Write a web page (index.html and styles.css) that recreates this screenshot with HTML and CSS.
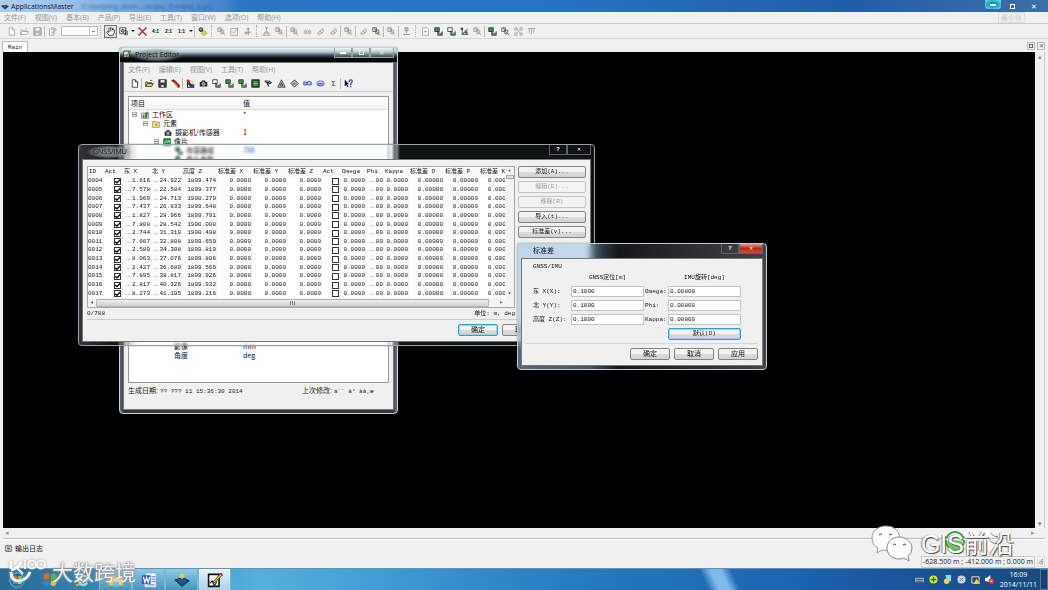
FILE: index.html
```html
<!DOCTYPE html>
<html lang="zh-CN">
<head>
<meta charset="utf-8">
<title>ApplicationsMaster</title>
<link rel="stylesheet" href="styles.css">
</head>
<body>
<svg class="defs" aria-hidden="true">
  <symbol id="new" viewBox="0 0 12 12"><path d="M3 1h4l3 3v7H3zM7 1v3h3" fill="#fff" stroke="currentColor"/></symbol>
  <symbol id="open" viewBox="0 0 12 12"><path d="M1 10V4h3l1 1h4v2M1 10l2-4h8l-2 4zM7 2q2-1 3 1" fill="var(--f,#fff)" stroke="currentColor"/></symbol>
  <symbol id="save" viewBox="0 0 12 12"><path d="M1 1h10v10H1z" fill="var(--f,#bbb)" stroke="currentColor"/><path d="M3 1h6v4H3zM4 8h4v3H4z" fill="#fff" stroke="currentColor" stroke-width=".6"/></symbol>
  <symbol id="folder" viewBox="0 0 12 12"><path d="M1 2h4l1 1h5v8H1z" fill="#f3e788" stroke="#8b8030"/><path d="M5 5h3v4H5z" fill="#b6a030"/></symbol>
  <symbol id="edit" viewBox="0 0 12 12"><path d="M2 3h6v8H2zM5 8l5-6 1 1-5 6zM4 1l7 1" fill="#fff" stroke="currentColor"/></symbol>
  <symbol id="hand" viewBox="0 0 12 12"><path d="M4 11 1 7l1-1 2 1V2l1-1 1 1V1h1l1 1h1v2l1-1 1 1v4L9 11z" fill="#fff" stroke="#111"/><path d="M6 2v4M8 2v4" stroke="#111" stroke-width=".7"/></symbol>
  <symbol id="zoomwin" viewBox="0 0 12 12"><path d="M1 1h8v8H1z" fill="#fff" stroke="#222"/><circle cx="5" cy="5" r="2" fill="#aaa" stroke="#222"/><path d="m6 7 3 4V3M11 5v6" stroke="#222" fill="none"/></symbol>
  <symbol id="cross" viewBox="0 0 12 12"><path d="m2 2 8 8M10 2l-8 8" stroke="#b01818" stroke-width="1.5"/><path d="M1 3V1h2M9 1h2v2M1 9v2h2M9 11h2V9" stroke="#422" fill="none"/></symbol>
  <symbol id="gears" viewBox="0 0 12 12"><circle cx="4" cy="3.500" r="2.500" fill="#555" stroke="#111"/><circle cx="8" cy="8" r="3" fill="#e8e020" stroke="#666" stroke-dasharray="1.500 1"/><circle cx="4" cy="3" r="1" fill="#eee"/></symbol>
  <symbol id="pair" viewBox="0 0 12 12"><path d="M1 1h5v5H1zM5 4h4v5H5zM7 7l4 4M3 1l3 5" fill="#ddd" stroke="currentColor"/></symbol>
  <symbol id="check" viewBox="0 0 12 12"><path d="M1 2h9v9H1zM3 6l2 2 6-7" fill="none" stroke="currentColor"/></symbol>
  <symbol id="plus" viewBox="0 0 12 12"><path d="M2 7h9M7 2v9M5 4l2-3 1 3M2 9h4" fill="none" stroke="currentColor" stroke-width="1.300"/></symbol>
  <symbol id="axes" viewBox="0 0 12 12"><path d="M3 1v9h8M3 10l7-7" fill="none" stroke="#3f8a4b" stroke-width="1.500"/><path d="M1 1h3v3H1zM7 6h3v3H7z" fill="#444"/></symbol>
  <symbol id="person" viewBox="0 0 12 12"><path d="M4 1h4M6 1v4L2 10M6 5l4 5M3 8h6M1 11h10" fill="none" stroke="currentColor" stroke-width="1.200"/></symbol>
  <symbol id="stamp" viewBox="0 0 12 12"><path d="M4 1h4v4H4zM6 5v4M1 10h10" fill="#ccc" stroke="currentColor" stroke-width="1.200"/></symbol>
  <symbol id="glass" viewBox="0 0 12 12"><circle cx="3.500" cy="7" r="2" fill="#ddd" stroke="currentColor"/><circle cx="8.500" cy="7" r="2" fill="#ddd" stroke="currentColor"/><path d="m2 5 2-2M7 5l2-2" stroke="currentColor"/></symbol>
  <symbol id="link" viewBox="0 0 12 12"><path d="M2 9 5 5l3 3-3 2zM6 5l3-3 1 4-2 2" fill="#ddd" stroke="currentColor"/></symbol>
  <symbol id="ruler" viewBox="0 0 12 12"><path d="M1 2h10M3 2v6M6 2v8M9 2v6" fill="none" stroke="currentColor"/></symbol>
  <symbol id="nodes" viewBox="0 0 12 12"><path d="M1 1h3v3H1zM8 1h3v3H8zM1 8h3v3H1zM8 8h3v3H8zM4 4l4 4M8 4 4 8" fill="#eee" stroke="currentColor"/></symbol>
  <symbol id="page" viewBox="0 0 12 12"><path d="M2 1h6l2 2v8H2zM4 6h4M6 4v4" fill="#fff" stroke="currentColor"/></symbol>
  <symbol id="imgs" viewBox="0 0 12 12"><path d="M1 1h6v5H1z" fill="var(--f,#fff)" stroke="#222"/><path d="M5 5v6h6V6L8 9z" fill="#696" stroke="#333"/><path d="M7 8l4-2" stroke="#dfd"/></symbol>
  <symbol id="camera" viewBox="0 0 12 12"><path d="M1 4h2l1-2h4l1 2h2v6H1z" fill="#222"/><circle cx="6" cy="6.500" r="2.200" fill="#888" stroke="#eee" stroke-width=".7"/></symbol>
  <symbol id="chip" viewBox="0 0 12 12"><path d="M1 1h10v10H1z" fill="#235c2c" stroke="#111"/><path d="M3 4h6M3 6h6M3 8h6" stroke="#9ed89e"/></symbol>
  <symbol id="photo" viewBox="0 0 12 12"><path d="M1 1h10v10H1z" fill="#1f9a45" stroke="#143"/><path d="m2 9 3-5 2 3 2-4 2 5" stroke="#cfc" fill="none"/></symbol>
  <symbol id="tri" viewBox="0 0 12 12"><path d="M6 1 11 11H1zM6 5 8 9H4z" fill="#bbb" stroke="#333"/></symbol>
  <symbol id="diamond" viewBox="0 0 12 12"><path d="M6 1 11 6 6 11 1 6z" fill="#888" stroke="#444"/><path d="m3 6 3-3 3 3-3 3z" fill="none" stroke="#ddd"/></symbol>
  <symbol id="blue" viewBox="0 0 12 12"><path d="M1 4h4v4H1zM5 6l2-3 4 1v4H7z" fill="#aac4ff" stroke="#2834b8"/></symbol>
  <symbol id="ring" viewBox="0 0 12 12"><ellipse cx="6" cy="6" rx="5" ry="3.500" fill="#c5cfff" stroke="#4b50bb"/><path d="M3 6h6v2H3z" fill="none" stroke="#4b50bb"/></symbol>
  <symbol id="pencil" viewBox="0 0 12 12"><path d="m1 2 3-1 7 7v3H9z" fill="#d02020" stroke="#401010"/><path d="m3 4 6 6" stroke="#ff8"/></symbol>
  <symbol id="help" viewBox="0 0 12 12"><path d="M1 1v9l2-2 2 3 1-1-2-3h3z" fill="#111"/><path d="M7 4q0-3 2-3t2 2-2 3v2M9 9v2" fill="none" stroke="#2530b0" stroke-width="1.500"/></symbol>
  <symbol id="arm" viewBox="0 0 12 12"><path d="M1 2h6l4 3-3 2-2-1 1 4H5L4 6 1 4z" fill="#333"/><path d="M3 3h3l2 2" fill="none" stroke="#ddd"/></symbol>
  <symbol id="mark" viewBox="0 0 12 12"><path d="M2 1v10h9" stroke="#222" stroke-width="1.500" fill="none"/><path d="m3 2 7 8-4 1-3-4z" fill="#333"/><path d="M1 1h4v3H1z" fill="#c03020"/><path d="M6 7h5v4H6z" fill="#28408c"/><path d="M6 3h3v3" stroke="#c8ba20" fill="none"/></symbol>
  <symbol id="work" viewBox="0 0 12 12"><path d="M1 3h10v8H1z" fill="#efe48c" stroke="#555"/><path d="M3 10V6h2v4zM6 10V3h3v7z" fill="#3a62a0"/><path d="M8 1h3v4H8z" fill="#4b9a50"/></symbol>
  <symbol id="note" viewBox="0 0 20 20"><path d="M2 3h13v15H2z" fill="#fff" stroke="#111" stroke-width="2"/><path d="M4 14q3-6 4 0t4-2" fill="none" stroke="#111" stroke-width="1.500"/><path d="M8 12 17 2l2 2-9 9-3 1z" fill="#eed520" stroke="#111"/><path d="m16 2 2-1 2 2-1 2z" fill="#a02860"/></symbol>
  <symbol id="gem" viewBox="0 0 20 20"><path d="m1 10 9 8 9-7-8-4z" fill="#134a7d" stroke="#07284a"/><path d="M5 7q5 6 10 0v5q-5 5-10 0z" fill="#1d5c93"/><path d="m6 5 4-4 4 4-4 4z" fill="#edc94d"/></symbol>
</svg>

<header class="titlebar">
  <svg class="ic"><use href="#gem"/></svg>
  <h1>ApplicationsMaster</h1>
  <span class="ghost">E:\tianjiang_data\...\anjiay_E\anjiay_E.prj</span>
  <div class="sys"><button class="min" aria-label="最小化"><i></i></button><button aria-label="还原"><i class="box"></i></button><button aria-label="关闭">✕</button></div>
</header>
<nav class="menubar">
  <button>文件(F)</button><button>视图(V)</button><button>基本(B)</button><button>产品(P)</button><button>导出(E)</button><button>工具(T)</button><button>窗口(W)</button><button>选项(O)</button><button>帮助(H)</button>
  <span class="tip">最小化</span>
</nav>
<div class="toolbar main">
  <button><svg><use href="#new"/></svg></button><button><svg><use href="#open"/></svg></button><button><svg><use href="#save"/></svg></button><i class="sep"></i>
  <button><svg><use href="#edit"/></svg></button>
  <select aria-label="比例"><option></option></select><i class="grip"></i>
  <button class="on"><svg><use href="#hand"/></svg></button><button><svg><use href="#zoomwin"/></svg></button><button class="drop" aria-label="更多"></button>
  <button><svg><use href="#cross"/></svg></button><button class="ratio">4:1</button><button class="ratio">2:1</button><button class="ratio">1:1</button><button class="drop" aria-label="更多"></button><i class="sep"></i>
  <button><svg><use href="#gears"/></svg></button><i class="grip"></i>
  <button><svg><use href="#pair"/></svg></button><button><svg><use href="#check"/></svg></button><button><svg><use href="#plus"/></svg></button><i class="grip"></i>
  <button><svg><use href="#person"/></svg></button><button><svg><use href="#pair"/></svg></button><i class="sep"></i>
  <button><svg><use href="#pair"/></svg></button><button><svg><use href="#glass"/></svg></button><button><svg><use href="#link"/></svg></button><button><svg><use href="#link"/></svg></button><i class="sep"></i>
  <button><svg><use href="#pair"/></svg></button><i class="sep"></i>
  <button><svg><use href="#link"/></svg></button><button class="mid"><svg><use href="#pair"/></svg></button><i class="sep"></i>
  <button><svg><use href="#pair"/></svg></button><i class="sep"></i>
  <button><svg><use href="#stamp"/></svg></button><i class="grip"></i>
  <button><svg><use href="#page"/></svg></button><button><svg class="g"><use href="#imgs"/></svg></button><button><svg><use href="#imgs"/></svg></button><button><svg><use href="#axes"/></svg></button><button><svg><use href="#pair"/></svg></button><i class="sep"></i>
  <button><svg class="g"><use href="#imgs"/></svg></button><button class="mid"><svg><use href="#pair"/></svg></button><button><svg><use href="#nodes"/></svg></button><button><svg><use href="#ruler"/></svg></button>
</div>
<div class="tabs"><button class="tab">Main</button><div class="dock"><button aria-label="浮动"><i class="box"></i></button><button aria-label="关闭">✕</button></div></div>
<main class="view"><div class="canvas"></div><div class="vbar"><span>▴</span><span>▾</span></div></main>
<div class="hbar"><span>◂</span><span>▸</span></div>
<section class="log"><svg viewBox="0 0 10 10"><path d="M1 1h8v8H1zM3 3h4M3 5h4M3 7h4" fill="none" stroke="#333"/></svg>输出日志</section>
<footer class="status"><output>-628.500 m ; -412.000 m ; 0.000 m</output><svg viewBox="0 0 10 12"><path d="M3 6h5v4H3zM6 6V3q2-2 2 1" fill="none" stroke="#777"/></svg></footer>

<section class="win editor">
  <header><svg><use href="#note"/></svg><h2>Project Editor</h2><div class="wbtn"><button aria-label="最小化"><i></i></button><button aria-label="最大化"><i class="box"></i></button><button aria-label="关闭">✕</button></div></header>
  <div class="body">
    <nav class="menubar"><button>文件(F)</button><button>编辑(E)</button><button>视图(V)</button><button>工具(T)</button><button>帮助(H)</button></nav>
    <div class="toolbar dark">
      <button><svg><use href="#new"/></svg></button><i class="sep"></i><button><svg class="y"><use href="#open"/></svg></button><button><svg class="k"><use href="#save"/></svg></button><button><svg><use href="#pencil"/></svg></button><i class="sep"></i>
      <button><svg><use href="#mark"/></svg></button><button><svg><use href="#camera"/></svg></button><button><svg><use href="#imgs"/></svg></button><button><svg class="g"><use href="#imgs"/></svg></button><button><svg class="g"><use href="#imgs"/></svg></button><button><svg><use href="#chip"/></svg></button><button><svg><use href="#arm"/></svg></button><button><svg><use href="#tri"/></svg></button><button><svg><use href="#diamond"/></svg></button><button><svg><use href="#blue"/></svg></button><button><svg><use href="#ring"/></svg></button><button class="sigma">Σ</button><i class="sep"></i>
      <button><svg><use href="#help"/></svg></button>
    </div>
    <div class="tree">
      <div class="row head"><span>项目</span><span>值</span></div>
      <div class="row"><span><i class="exp"></i><svg><use href="#work"/></svg>工作区</span><span>*</span></div>
      <div class="row l1"><span><i class="exp"></i><svg><use href="#folder"/></svg>元素</span><span></span></div>
      <div class="row l2"><span><svg><use href="#camera"/></svg>摄影机/传感器</span><span>1</span></div>
      <div class="row l2"><span><i class="exp"></i><svg><use href="#photo"/></svg>像片</span><span></span></div>
      <div class="row l3"><span><svg class="g"><use href="#imgs"/></svg>传感器组</span><span class="num">788</span></div>
      <div class="row l3"><span><svg class="g"><use href="#imgs"/></svg>像片参数</span><span></span></div>
      <div class="space"></div>
      <div class="row l2"><span>影像</span><span>mm</span></div>
      <div class="row l2"><span>角度</span><span>deg</span></div>
    </div>
    <div class="dates"><span>生成日期: <code>?? ??? 11 15:36:30 2014</code></span><span>上次修改: <code>à¨¨ à° àà‚æ</code></span></div>
  </div>
</section>

<section class="win gnss">
  <header><h2>GNSS/IMU</h2><div class="wbtn"><button aria-label="帮助">?</button><button aria-label="关闭">✕</button></div></header>
  <div class="body">
    <div class="cols">
      <div class="grid">
        <div class="clip">
          <table>
            <colgroup><col class="c16"><col class="c19"><col class="c28"><col class="c31"><col class="c35"><col class="c35"><col class="c35"><col class="c35"><col class="c19"><col class="c25"><col class="c18"><col class="c25"><col class="c35"><col class="c35"><col class="c35"></colgroup>
            <thead><tr><th>ID</th><th>Act</th><th>东 X</th><th>北 Y</th><th>高度 Z</th><th>标准差 X</th><th>标准差 Y</th><th>标准差 Z</th><th>Act</th><th>Omega</th><th>Phi</th><th>Kappa</th><th>标准差 O</th><th>标准差 P</th><th>标准差 K</th></tr></thead>
            <tbody id="rows"></tbody>
          </table>
        </div>
        <div class="gv"><span>▴</span><b></b><span>▾</span></div>
        <div class="gh"><span>◂</span><b><i></i></b><span>▸</span></div>
      </div>
      <div class="side"><button>添加(A)...</button><button disabled>编辑(E)...</button><button disabled>移除(R)</button><button>导入(t)...</button><button>标准差(v)...</button></div>
    </div>
    <div class="count"><span>0/788</span><span>单位: m, deg</span></div>
    <div class="actions"><button class="def">确定</button><button>取消</button><button>应用</button></div>
  </div>
</section>

<section class="win dev">
  <header><h2>标准差</h2><div class="wbtn"><button aria-label="帮助">?</button><button class="red" aria-label="关闭">✕</button></div></header>
  <form class="body">
    <fieldset>
      <legend>GNSS/IMU</legend>
      <div class="fields">
        <b class="h1">GNSS定位[m]</b><b class="h2">IMU旋转[deg]</b>
        <label for="x">东 X(X):</label><input id="x" value="0.1000"><label for="o">Omega:</label><input id="o" value="0.00800">
        <label for="y">北 Y(Y):</label><input id="y" value="0.1000"><label for="p">Phi:</label><input id="p" value="0.00800">
        <label for="z">高度 Z(Z):</label><input id="z" value="0.1000"><label for="k">Kappa:</label><input id="k" value="0.00800">
        <button type="button" class="def">默认(D)</button>
      </div>
    </fieldset>
    <div class="actions"><button type="button">确定</button><button type="button">取消</button><button type="button">应用</button></div>
  </form>
</section>

<footer class="taskbar">
  <button class="start" aria-label="开始"><svg viewBox="0 0 20 20"><circle cx="10" cy="10" r="9" fill="#206a9d" stroke="#8cc8e0"/><path d="M5 6q2-2 5-1v4q-3-1-5 1z" fill="#e75b27"/><path d="M11 5q2 1 5-1v5q-3 1-5 0z" fill="#8cc63e"/><path d="M5 11q2-2 5-1v5q-3-1-5 0z" fill="#35a7df"/><path d="M11 10q2 1 5 0v4q-3 2-5 1z" fill="#f9c62d"/></svg></button>
  <button aria-label="Office"><svg viewBox="0 0 20 20"><path d="M2 3q4-3 7 0v6H2z" fill="#e86a22"/><path d="M11 3q4-3 7 1v6h-7z" fill="#5eb53a"/><path d="M2 11h7v6q-5 2-7-2z" fill="#2f88d0"/><path d="M11 11h7q1 5-4 7l-3-2z" fill="#f2c52f"/></svg></button>
  <button aria-label="浏览器"><svg viewBox="0 0 20 20"><path d="M15 13q-2 4-6 3t-4-6 6-5 5 5H6" fill="none" stroke="#9fdcf4" stroke-width="3"/><path d="M2 15Q1 19 8 14T18 3" fill="none" stroke="#f0ce55" stroke-width="1.500"/></svg></button>
  <button class="task" aria-label="资源管理器"><svg viewBox="0 0 20 20"><path d="M1 4h7l1 2h10v11H1z" fill="#eccb6a" stroke="#c9a040"/><path d="M1 9h18v5H1z" fill="#f8e6a6"/><path d="M6 12h8v6H6z" fill="#77bde4"/></svg></button>
  <button class="task" aria-label="Word"><svg viewBox="0 0 20 20"><path d="M6 1h13v18H4z" fill="#f3f8ff" stroke="#7c9ac8"/><path d="M1 4h11v11H1z" fill="#3a62ae"/><path d="m3 6 2 7 2-6 2 6 2-7" fill="none" stroke="#fff" stroke-width="1.500"/><path d="M13 6h5M13 9h5M13 12h5M7 16h10" stroke="#3a62ae"/></svg></button>
  <button class="task" aria-label="ApplicationsMaster"><svg viewBox="0 0 20 20"><use href="#gem"/></svg></button>
  <button class="task cur" aria-label="Project Editor"><svg viewBox="0 0 20 20"><use href="#note"/></svg></button>
  <div class="tray">
    <svg viewBox="0 0 10 10"><path d="M0 3h10v5H0z" fill="#8fa3b5"/><path d="M1 5h8M2 7h6" stroke="#4a5c6c"/></svg>
    <svg viewBox="0 0 10 10"><circle cx="5" cy="5" r="4.500" fill="#e6e43a"/><path d="M5 2v6M2 5h6" stroke="#287330" stroke-width="1.500"/></svg>
    <svg viewBox="0 0 10 10"><path d="M3 0h6v7H4z" fill="#8fd1f3"/><circle cx="4" cy="7" r="3" fill="#ecd35a"/></svg>
    <svg viewBox="0 0 10 10"><circle cx="5" cy="5" r="4.500" fill="#cdd8de"/><path d="m3 3 4 4M7 3 3 7" stroke="#678"/></svg>
    <svg viewBox="0 0 10 10"><path d="M1 2h8v7H1z" fill="#345" stroke="#eee"/><path d="m6 4 4 6H3z" fill="#f2d33b"/></svg>
    <svg viewBox="0 0 10 10"><path d="M0 3h2l4-3v9L2 7H0z" fill="#f2f2f2"/><circle cx="7" cy="7" r="3" fill="#d83838"/><path d="m6 6 2 2M8 6 6 8" stroke="#fff"/></svg>
  </div>
  <time>16:09<br>2014/11/11</time><i class="peek"></i>
</footer>

<div class="mark-left"><svg viewBox="0 0 40 26"><g fill="none" stroke="#fff" stroke-opacity=".85" stroke-width="3"><path d="M3 3v8M13 4Q11 10 3 12M3 14q0 9 8 9 8-1 11-9"/><path d="m8 9 7 7" stroke-width="2"/><path d="M17 2v9" stroke-width="2"/><circle cx="24" cy="6.500" r="4" stroke-width="2"/><circle cx="33" cy="6.500" r="4" stroke-width="2"/></g></svg><span>大数跨境</span></div>
<div class="mark-right">
  <svg viewBox="0 0 42 38"><path d="M15 1C7 1 1 6 1 13q0 7 6 10l-1 5 5-3q4 1 8 0-1-9 10-12Q27 1 15 1z" fill="#fff" stroke="#999"/><path d="M28 12c-7 0-12 5-12 11s5 11 12 11q3 0 5-1l5 3-1-5q4-3 4-8c0-6-6-11-13-11z" fill="#fff" stroke="#888"/><path d="M8 10q2-2 3 0M18 10q2-2 3 0M22 20q2-2 3 0M32 20q2-2 3 0" stroke="#444" fill="none"/></svg>
  <span>GIS前沿</span>
  <svg class="ball" viewBox="0 0 60 24"><rect x="18" y="1" width="40" height="20" rx="10" fill="#fff" opacity=".7"/><circle cx="12" cy="12" r="9" fill="#f4fff0" stroke="#35a348" stroke-width="2"/><path d="M4 13q8-4 16 0-2 8-8 8t-8-8z" fill="#75c65d"/></svg>
</div>
<script src="rows.js"></script>
</body>
</html>
```
FILE: styles.css
```css
* { box-sizing: border-box; }
body {
  margin: 0; min-height: 100vh; display: flex; flex-direction: column;
  background: #f0f0f0; color: #222; overflow: hidden;
  font: 7px/9px "Open Sans", "Noto Sans CJK SC", sans-serif;
}
button, input, select { font: inherit; color: inherit; padding: 0; margin: 0; }
button { border: 0; background: none; white-space: nowrap; }
h1, h2 { margin: 0; font-size: 7px; font-weight: 400; }
i { font-style: normal; }
.defs { position: absolute; width: 0; height: 0; }
.box { display: block; width: 5px; height: 5px; border: 1px solid currentColor; }

.titlebar {
  height: 12px; display: flex; align-items: center; gap: 2px; padding-left: 1px; flex: none;
  background: linear-gradient(90deg, #aecdee 0, #9cc3ec 60px, #6fa5dd 140px, #4685cd 225px, #2a75c6 240px, #2672c4 560px, #215fa9 850px, #3d6fa8 100%);
}
.titlebar h1 { color: #111; }
.ic { width: 8px; height: 8px; }
.ghost { margin-left: 6px; color: #1b4a82; filter: blur(1px); opacity: .7; }
.sys { margin-left: auto; display: flex; height: 12px; padding-right: 3px; }
.sys button { width: 22px; display: grid; place-items: center; color: #fff; }
.sys .min { background: radial-gradient(#1a85b0 20%, #58dcf0 90%); width: 16px; height: 9px; border-radius: 0 0 3px 3px; }
.sys .min i, .wbtn i:not(.box) { width: 6px; height: 2px; background: #fff; }

.menubar { height: 12px; flex: none; display: flex; align-items: center; gap: 9px; padding-left: 4px; color: #999; border-bottom: 1px solid #ccc; }
.tip { margin-left: auto; margin-right: 23px; padding: 0 2px; border: 1px solid #ddd; color: #ccc; }
.toolbar { height: 15px; flex: none; display: flex; align-items: center; padding-left: 5px; color: #999; border-bottom: 1px solid #d8d8d8; }
.toolbar button { width: 13px; height: 13px; display: grid; place-items: center; flex: none; }
.toolbar svg { width: 9px; height: 9px; }
.toolbar .on { border: 1px solid #777; background: #ddd; }
.toolbar .drop { width: 6px; }
.drop::before { content: ""; border: 2px solid transparent; border-top: 2px solid #222; border-bottom: 0; }
.toolbar .ratio { font: bold 5px/9px "Liberation Sans", sans-serif; color: #111; }
.toolbar .mid { color: #555; }
.toolbar .sigma { color: #111; }
.sep { width: 1px; height: 11px; margin-right: 1px; background: #bbb; flex: none; }
.grip { width: 2px; height: 12px; margin: 0 2px; border-left: 1px dotted #aaa; flex: none; }
.toolbar select {
  appearance: none; width: 37px; height: 10px; margin-left: 2px; border: 1px solid #b8bdc4; border-radius: 0;
  background: linear-gradient(#888, #888) right 2px center / 3px 1px no-repeat, linear-gradient(#ccc, #ccc) right 7px center / 1px 10px no-repeat, #fafafa;
}
.toolbar.dark { color: #222; }
.g { --f: #3a9a4a; }
.y { --f: #e8d860; }
.k { --f: #444; }

.tabs { height: 13px; flex: none; display: flex; align-items: flex-end; padding: 0 3px 0 2px; }
.tab { width: 26px; height: 11px; background: #fff; border: 1px solid #bbb; border-bottom: 0; font: 6px/9px "Liberation Mono", monospace; }
.dock { margin-left: auto; display: flex; gap: 2px; align-self: center; color: #666; }
.dock button { width: 8px; height: 8px; border: 1px solid #bbb; display: grid; place-items: center; font-size: 6px; line-height: 6px; }
.dock .box { width: 4px; height: 4px; }
.view { flex: 1; display: flex; margin: 0 3px; }
.canvas { flex: 1; background: #000; }
.vbar { width: 10px; display: flex; flex-direction: column; justify-content: space-between; align-items: center; color: #888; border-right: 1px solid #ccc; }
.hbar { height: 11px; flex: none; margin: 0 3px; padding: 0 10px 0 2px; display: flex; justify-content: space-between; color: #999; border-bottom: 1px solid #bbb; }
.log { height: 17px; flex: none; display: flex; align-items: center; gap: 3px; padding-left: 5px; border-top: 1px solid #fff; color: #111; }
.log svg { width: 7px; height: 7px; }
.status { height: 12px; flex: none; display: flex; justify-content: flex-end; gap: 2px; padding-right: 3px; }
.status output { border: 1px solid #ccc; padding: 0 1px; }
.status svg { width: 8px; height: 11px; border: 1px solid #ddd; }

.win { position: absolute; display: flex; flex-direction: column; border: 1px solid #98a4aa; border-radius: 4px; padding: 0 3px 3px; box-shadow: 0 0 1px #000; }
.win > header { height: 14px; flex: none; display: flex; align-items: flex-start; gap: 3px; }
.win h2 { line-height: 14px; }
.win .body { flex: 1; background: #f0f0f0; border: 1px solid #777; min-height: 0; display: flex; flex-direction: column; }
.wbtn { margin-left: auto; display: flex; }
.wbtn button { width: 18px; height: 10px; display: grid; place-items: center; color: #fff; border: 1px solid #59636a; border-top: 0; font-weight: 700; line-height: 8px; }
.wbtn button:last-child { width: 24px; }

.editor { left: 119px; top: 47px; width: 279px; height: 367px; background: linear-gradient(90deg, #667, #30363a 4px, #30363a calc(100% - 4px), #778); border-color: #c5d4da; }
.editor > header { margin: 0 -3px; padding: 0 3px; background: linear-gradient(#e4f4f7 0, #b6c9ce 4px, #4d565a 7px, #0c0e10 10px, #000); border-radius: 3px 3px 0 0; }
.editor > header svg { width: 8px; height: 8px; margin-top: 2px; }
.editor h2 { padding: 0 4px; color: #111; background: radial-gradient(closest-side, rgba(140, 152, 158, .9), rgba(140, 152, 158, .7) 60%, transparent); }
.editor > header { gap: 0; }
.editor .wbtn button { color: #dde6ea; border-color: #93a2a8; background: linear-gradient(rgba(255, 255, 255, .4), rgba(120, 130, 136, .4)); font-weight: 400; }
.editor .menubar { height: 13px; border: 0; }
.editor .toolbar { height: 16px; padding-left: 4px; border-color: #ccc; }
.tree { flex: 1; display: flex; flex-direction: column; margin: 4px 4px 0 4px; padding-bottom: 22px; background: #fff; border: 1px solid #999; min-height: 0; }
.row { display: grid; grid-template-columns: 114px 1fr; height: 9px; line-height: 9px; flex: none; font-family: "Noto Sans CJK SC", sans-serif; color: #111; }
.row span { display: flex; align-items: center; gap: 2px; padding-left: 3px; }
.row svg { width: 8px; height: 8px; margin-right: 1px; }
.row .num { color: #2468b0; }
.row.head { height: 13px; background: linear-gradient(#fff, #f2f3f5); border-bottom: 1px solid #ddd; }
.row.head span { padding-left: 2px; }
.row.head span + span, .row span + span { padding-left: 0; }
.row.l1 span:first-child { padding-left: 14px; }
.row.l2 span:first-child { padding-left: 35px; }
.row.l2 span:first-child:has(.exp) { padding-left: 25px; }
.row.l3 span:first-child { padding-left: 46px; }
.row.l2 span:not(:has(svg)):first-child { padding-left: 45px; }
.exp { width: 5px; height: 5px; border: 1px solid #aaa; margin-right: 2px; background: linear-gradient(#777, #777) center / 3px 1px no-repeat; }
.space { flex: 1; }
.dates { display: flex; height: 26px; flex: none; padding: 3px 0 0 4px; font-family: "Liberation Sans", "Noto Sans CJK SC", sans-serif; }
.dates span { width: 174px; flex: none; white-space: nowrap; }
.dates span + span { width: auto; }
code { font: 6px/9px "Liberation Mono", monospace; }

.gnss, .dev { font-family: "Liberation Mono", "Noto Sans CJK SC", monospace; font-size: 6px; color: #111; }
.gnss { left: 78px; top: 144px; width: 517px; height: 202px; background: linear-gradient(90deg, rgba(70, 74, 78, .7), rgba(40, 42, 44, .3) 42px, rgba(220, 235, 245, .08) 60px); backdrop-filter: blur(1px); }
.gnss h2 { margin-left: 4px; padding: 0 7px; font-family: "Open Sans", sans-serif; color: #111; background: radial-gradient(closest-side, rgba(150, 155, 160, .9), rgba(150, 155, 160, .7) 60%, transparent); }
.gnss .body { padding: 6px 4px 0 4px; }
.cols { display: flex; gap: 3px; }
.grid { flex: 1; min-width: 0; height: 142px; display: grid; grid-template: 1fr 9px / 1fr 9px; border: 1px solid #aaa; background: #fff; }
.clip { overflow: hidden; min-width: 0; min-height: 0; }
table { table-layout: fixed; width: 426px; height: 131px; border-collapse: separate; border-spacing: 0; }
th, td { padding: 0 1px; text-align: right; white-space: nowrap; overflow: hidden; line-height: 8px; font-weight: 400; }
td { background: linear-gradient(#f2f2f2, #f2f2f2) right / 1px 100% no-repeat; }
th { text-align: left; height: 10px; background: #fafafa; }
td:first-child { text-align: left; padding: 0; }
.more { font-family: "Liberation Sans", sans-serif; line-height: 0; margin-right: 1px; }
.c16 { width: 16px; } .c18 { width: 18px; } .c19 { width: 19px; } .c25 { width: 25px; }
.c28 { width: 28px; } .c31 { width: 31px; } .c35 { width: 35px; }
td input { appearance: none; display: block; width: 7px; height: 7px; border: 1px solid #333; background: #fff; }
.gnss td input { margin: 0 1px 0 auto; }
td input:checked::before { content: ""; display: block; width: 5px; height: 5px; background: #111; clip-path: polygon(0 40%, 40% 60%, 100% 0, 100% 40%, 40% 100%, 0 70%); }
.gv, .gh { background: #f3f3f3; display: flex; align-items: center; color: #555; line-height: 8px; }
.gv { flex-direction: column; }
.gv b { width: 8px; height: 4px; border: 1px solid #aaa; background: #ddd; }
.gv span:last-child { margin-top: auto; }
.gh { grid-column: 1 / 3; padding: 0 11px 0 2px; gap: 2px; }
.gh b { flex: 1; height: 8px; margin-right: 8px; border: 1px solid #b5b5b5; border-radius: 1px; background: linear-gradient(#eee, #cfcfcf); display: grid; place-items: center; }
.gh i { width: 5px; height: 4px; background: repeating-linear-gradient(90deg, #777 0 1px, transparent 1px 2px); }
.side { width: 68px; display: flex; flex-direction: column; gap: 3px; }
.side button, .actions button, .def { height: 12px; line-height: 10px; border: 1px solid #858585; border-radius: 2px; background: linear-gradient(#f3f3f3 50%, #dcdcdc 50%, #d2d2d2); }
.side button:disabled { color: #999; border-color: #c5c5c5; background: #f3f3f3; }
.count { display: flex; justify-content: space-between; height: 12px; line-height: 11px; border-bottom: 1px solid #ccc; padding-right: 71px; }
.actions { display: flex; justify-content: flex-end; gap: 4px; padding-top: 4px; }
.actions button { width: 40px; font-size: 7px; }
.actions .def, .def { border-color: #3c9cc8; box-shadow: inset 0 0 1px 1px #8fd5ee; }

.dev { left: 517px; top: 243px; width: 250px; height: 127px; background: linear-gradient(90deg, rgba(150, 190, 225, .55), rgba(150, 190, 225, .45) 72px, rgba(40, 44, 50, .5) 100px, rgba(110, 114, 120, .6)); backdrop-filter: blur(3px); border-color: #c0ccd4; }
.dev h2 { padding-left: 12px; color: #111; }
.dev .red { background: linear-gradient(#d89a90, #b82a18 50%, #d04a30); }
.dev .body { padding: 3px 4px 0; }
fieldset { margin: 0; padding: 0; border: 0; border-bottom: 1px solid #d5d5d5; height: 82px; }
legend { padding: 0 7px; line-height: 10px; }
.fields { display: grid; grid-template-columns: 38px 73px 24px 73px; grid-template-rows: 11px repeat(3, 11px) 12px; row-gap: 3px; padding-left: 7px; align-items: center; white-space: nowrap; }
.fields b { font-weight: 400; text-align: center; }
.h1 { grid-column: 1 / 3; padding-left: 38px; }
.h2 { grid-column: 3 / 5; padding-left: 24px; }
.fields input { width: 100%; height: 11px; border: 1px solid #c0c4c8; padding: 0 1px; background: #fff; }
.fields label:nth-of-type(even) { padding-left: 1px; }
.fields .def { grid-column: 4; }
.dev .actions { padding: 4px 0 0; }

.taskbar { height: 22px; flex: none; display: flex; align-items: center; border-top: 1px solid #6d8ea4; background: linear-gradient(65deg, transparent 0 67%, rgba(150, 205, 245, .8) 68% 69%, transparent 70%), linear-gradient(90deg, #276a94 0, #3b8fbd 130px, #55b0dd 260px, #3d98d2 400px, #2478bd 600px, #1c64b0 800px, #1b559b 900px, #194a7f 100%); }
.taskbar button { width: 33px; height: 21px; display: grid; place-items: center; }
.taskbar button svg { width: 16px; height: 16px; }
.taskbar .task { border: 1px solid #78b6d4; border-width: 0 1px; background: linear-gradient(#8ccbe6, #4795c0); }
.taskbar .cur { background: linear-gradient(#e8f4fa, #a9d3e8); }
.tray { margin-left: auto; display: flex; gap: 5px; padding-right: 6px; }
.tray svg { width: 9px; height: 9px; }
time { color: #fff; text-align: center; line-height: 10px; }
.peek { width: 8px; height: 21px; margin-left: 3px; border: 1px solid #4a7aa8; background: #1a3f6c; }

.mark-left, .mark-right { position: absolute; display: flex; align-items: center; color: #fff; pointer-events: none; }
.mark-left { left: 8px; bottom: 6px; gap: 4px; font: 21px/26px "Noto Sans CJK SC", sans-serif; color: rgba(255, 255, 255, .85); text-shadow: 0 0 2px #999; filter: drop-shadow(0 0 1px #999); }
.mark-left svg { width: 40px; height: 26px; }
.mark-right { right: 34px; bottom: 27px; gap: 8px; font: 25px/38px "Liberation Sans", "Noto Sans CJK SC", sans-serif; text-shadow: 1px 1px 1px #444, -1px 0 1px #888; }
.mark-right svg { width: 42px; height: 38px; }
.mark-right .ball { position: absolute; left: 72px; top: 4px; width: 60px; height: 24px; z-index: -1; }
```
FILE: rows.js
```js
const data = [
  ["0004", "1.616", "24.922", "1899.474"],
  ["0005", "7.578", "22.584", "1899.377"],
  ["0006", "1.969", "24.713", "1900.279"],
  ["0007", "7.437", "26.833", "1899.648"],
  ["0008", "1.827", "28.966", "1899.791"],
  ["0009", "7.808", "28.542", "1900.008"],
  ["0010", "2.744", "31.310", "1900.498"],
  ["0011", "7.667", "32.808", "1899.659"],
  ["0012", "2.589", "34.308", "1899.819"],
  ["0013", "8.063", "37.076", "1899.806"],
  ["0014", "2.427", "36.680", "1899.569"],
  ["0015", "7.895", "38.817", "1899.926"],
  ["0016", "2.817", "40.326", "1899.932"],
  ["0017", "8.273", "41.195", "1899.216"]
];
const more = '<span class="more">...</span>';
document.getElementById("rows").innerHTML = data.map(([id, x, y, z]) => `<tr>
  <td>${id}</td><td><input type="checkbox" checked aria-label="${id} GNSS"></td>
  <td>${more}${x}</td><td>${more}${y}</td><td>${z}</td>
  <td>0.0000</td><td>0.0000</td><td>0.0000</td>
  <td><input type="checkbox" aria-label="${id} IMU"></td>
  <td>0.0000</td><td>${more}00</td><td>0.0000</td>
  <td>0.00000</td><td>0.00000</td><td>0.00000</td></tr>`).join("");
```
